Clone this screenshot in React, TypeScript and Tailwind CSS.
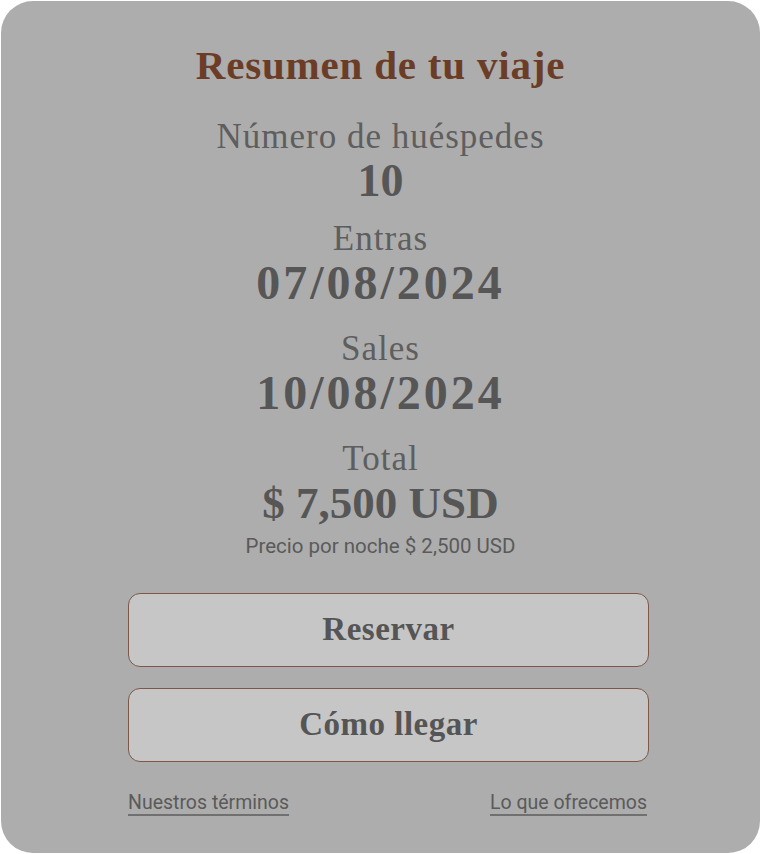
import React from "react";

function Label({ children }: { children: React.ReactNode }) {
  return (
    <div className="font-['Liberation_Serif','DejaVu_Serif',serif] text-[35px] leading-[42px] tracking-[1px] text-[#5e5e5e]">
      {children}
    </div>
  );
}

export default function App() {
  return (
    <div className="w-[761px] h-[854px] bg-white p-px">
      <div className="h-full w-full rounded-[32px] bg-[#adadad] flex flex-col items-center pt-[42px] font-['Liberation_Serif','DejaVu_Serif',serif]">
        <h1 className="text-[41px] leading-[44px] tracking-[0.8px] font-bold text-[#6b3d27]">
          Resumen de tu viaje
        </h1>
        <div className="mt-[29px] flex flex-col items-center">
          <Label>Número de huéspedes</Label>
          <div className="text-[46px] leading-[46px] font-bold text-[#565656]">10</div>
        </div>
        <div className="mt-[14px] flex flex-col items-center">
          <Label>Entras</Label>
          <div className="text-[48px] leading-[46px] tracking-[3px] font-bold text-[#565656]">07/08/2024</div>
        </div>
        <div className="mt-[22px] flex flex-col items-center">
          <Label>Sales</Label>
          <div className="text-[48px] leading-[46px] tracking-[3px] font-bold text-[#565656]">10/08/2024</div>
        </div>
        <div className="mt-[22px] flex flex-col items-center">
          <Label>Total</Label>
          <div className="text-[45px] leading-[46px] font-bold text-[#565656]">$ 7,500 USD</div>
        </div>
        <div className="font-['Roboto','Liberation_Sans',sans-serif] text-[20.5px] leading-[20px] text-[#5a5a5a] mt-[10px]">
          Precio por noche $ 2,500 USD
        </div>
        <div className="w-[521px] ml-[16px] flex flex-col gap-[21px] mt-[37px]">
          <button className="h-[74px] w-full rounded-[12px] border border-[#7d5747] bg-[#c6c6c6] text-[33px] tracking-[0.5px] font-bold text-[#555555]">
            Reservar
          </button>
          <button className="h-[74px] w-full rounded-[12px] border border-[#7d5747] bg-[#c6c6c6] text-[33px] tracking-[0.5px] font-bold text-[#555555]">
            Cómo llegar
          </button>
        </div>
        <div className="w-[521px] ml-[16px] flex justify-between mt-[29px] font-['Roboto','Liberation_Sans',sans-serif] text-[19.5px] leading-[24px] text-[#5a5a5a]">
          <a className="underline decoration-[#707070] decoration-2 underline-offset-[5px]">Nuestros términos</a>
          <a className="underline decoration-[#707070] decoration-2 underline-offset-[5px] mr-[2px]">Lo que ofrecemos</a>
        </div>
      </div>
    </div>
  );
}
